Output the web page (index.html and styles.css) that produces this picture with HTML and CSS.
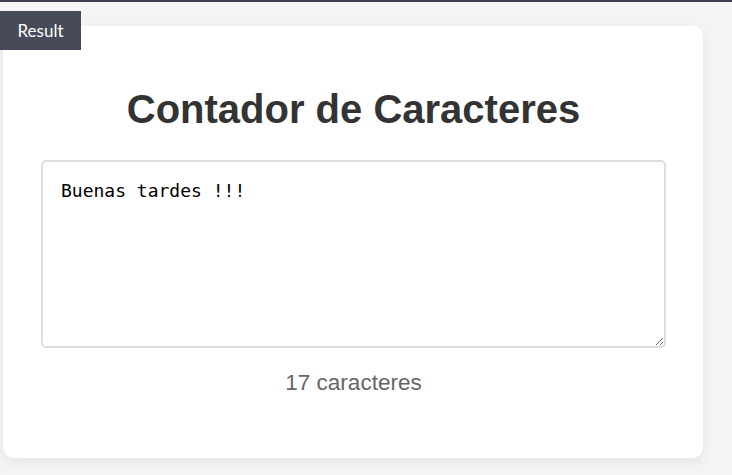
FILE: index.html
```html
<!DOCTYPE html>
<html lang="es">
<head>
<meta charset="utf-8">
<title>Contador de Caracteres</title>
<link rel="stylesheet" href="styles.css">
</head>
<body>
<div class="topline"></div>
<div class="tab">Result</div>
<main class="card">
  <h1 class="title">Contador de Caracteres</h1>
  <textarea class="input">Buenas tardes !!!</textarea>
  <p class="count">17 caracteres</p>
</main>
</body>
</html>
```

FILE: styles.css
```css
html, body {
  margin: 0;
  padding: 0;
}
body {
  background: #f4f4f4;
  font-family: "Liberation Sans", Arial, sans-serif;
  width: 732px;
  height: 475px;
  overflow: hidden;
  position: relative;
}
.topline {
  height: 2px;
  background: #3b3e4e;
}
.tab {
  position: absolute;
  left: 0;
  top: 11px;
  width: 81px;
  height: 39px;
  box-sizing: border-box;
  background: #474a59;
  color: #fff;
  font-family: Lato, "Open Sans", sans-serif;
  font-size: 17px;
  line-height: 39px;
  text-align: center;
}
.card {
  display: flex;
  flex-direction: column;
  align-items: stretch;
  margin: 24px 0 0 3px;
  width: 700px;
  height: 432px;
  box-sizing: border-box;
  padding: 30px 37px 0 38px;
  background: #fff;
  border-radius: 10px;
  box-shadow: 0 4px 12px rgba(0, 0, 0, 0.07);
}
.title {
  margin: 30px 0 28px;
  font-size: 40px;
  line-height: 46px;
  font-weight: bold;
  color: #333;
  text-align: center;
}
.input {
  display: block;
  width: 625px;
  height: 188px;
  box-sizing: border-box;
  margin: 0;
  padding: 18px;
  border: 2px solid #ddd;
  border-radius: 5px;
  font-family: "DejaVu Sans Mono", "Liberation Mono", monospace;
  font-size: 18px;
  color: #000;
  background: #fff;
  outline: none;
}
.count {
  margin: 22px 0 0;
  font-size: 22.5px;
  line-height: 26px;
  color: #666;
  text-align: center;
}
```
